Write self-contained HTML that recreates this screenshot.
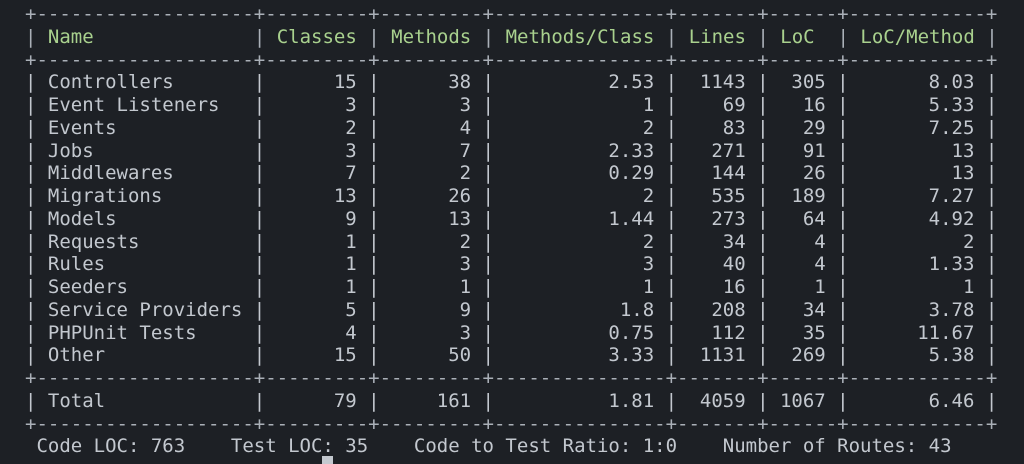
<!DOCTYPE html>
<html><head><meta charset="utf-8"><style>
html,body{margin:0;padding:0;background:#1d2025;width:1024px;height:461px;overflow:hidden}
pre{margin:0;position:absolute;left:25px;top:3px;font-family:"DejaVu Sans Mono","Liberation Mono",monospace;font-size:19px;line-height:22.75px;color:#c3c8cf;white-space:pre}
.g{color:#a9d18e}
.b{color:#aab0b8}
.cur{position:absolute;left:322px;top:456px;width:11px;height:8px;background:#c3c8cf}
</style></head><body>
<pre><span class="b">+-------------------+---------+---------+---------------+-------+------+------------+</span>
<span class="b">|</span> <span class="g">Name</span>              <span class="b">|</span> <span class="g">Classes</span> <span class="b">|</span> <span class="g">Methods</span> <span class="b">|</span> <span class="g">Methods/Class</span> <span class="b">|</span> <span class="g">Lines</span> <span class="b">|</span> <span class="g">LoC</span>  <span class="b">|</span> <span class="g">LoC/Method</span> <span class="b">|</span>
<span class="b">+-------------------+---------+---------+---------------+-------+------+------------+</span>
| Controllers       |      15 |      38 |          2.53 |  1143 |  305 |       8.03 |
| Event Listeners   |       3 |       3 |             1 |    69 |   16 |       5.33 |
| Events            |       2 |       4 |             2 |    83 |   29 |       7.25 |
| Jobs              |       3 |       7 |          2.33 |   271 |   91 |         13 |
| Middlewares       |       7 |       2 |          0.29 |   144 |   26 |         13 |
| Migrations        |      13 |      26 |             2 |   535 |  189 |       7.27 |
| Models            |       9 |      13 |          1.44 |   273 |   64 |       4.92 |
| Requests          |       1 |       2 |             2 |    34 |    4 |          2 |
| Rules             |       1 |       3 |             3 |    40 |    4 |       1.33 |
| Seeders           |       1 |       1 |             1 |    16 |    1 |          1 |
| Service Providers |       5 |       9 |           1.8 |   208 |   34 |       3.78 |
| PHPUnit Tests     |       4 |       3 |          0.75 |   112 |   35 |      11.67 |
| Other             |      15 |      50 |          3.33 |  1131 |  269 |       5.38 |
<span class="b">+-------------------+---------+---------+---------------+-------+------+------------+</span>
| Total             |      79 |     161 |          1.81 |  4059 | 1067 |       6.46 |
<span class="b">+-------------------+---------+---------+---------------+-------+------+------------+</span>
 Code LOC: 763    Test LOC: 35    Code to Test Ratio: 1:0    Number of Routes: 43</pre>
<div class="cur"></div>
</body></html>
